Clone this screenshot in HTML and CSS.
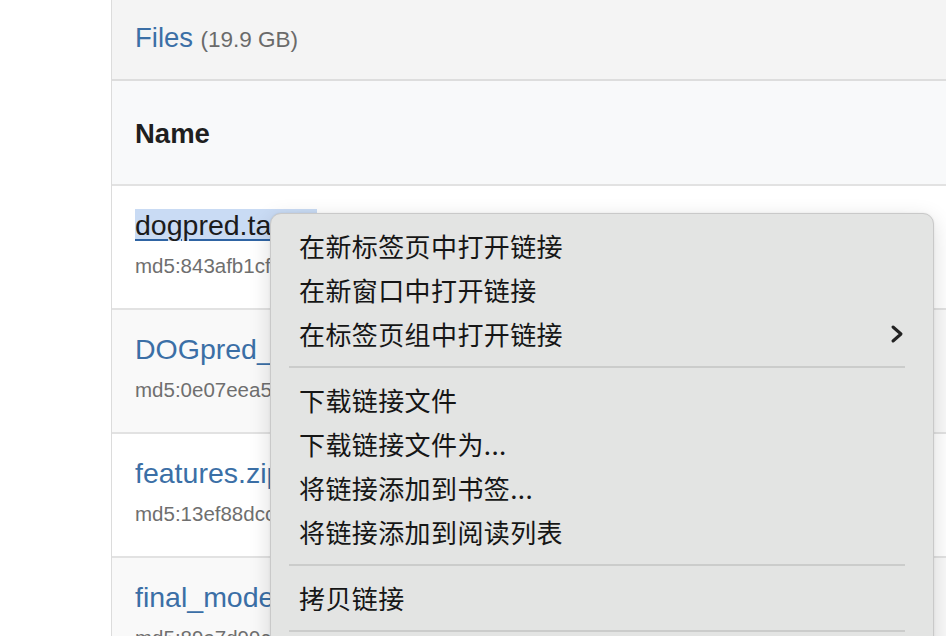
FILE: index.html
```html
<!DOCTYPE html>
<html lang="zh-CN">
<head>
<meta charset="utf-8">
<title>Files</title>
<link rel="stylesheet" href="styles.css">
</head>
<body>
<div class="page">
  <div class="card">
    <div class="card-head">
      <span class="title">Files</span> <span class="size">(19.9 GB)</span>
    </div>
    <div class="thead">Name</div>
    <div class="row">
      <div class="fname"><a class="link selected" href="#">dogpred.tar.gz</a></div>
      <div class="md5">md5:843afb1cf0a2e4b7c9d1f3a5</div>
    </div>
    <div class="row alt">
      <div class="fname"><a class="link" href="#">DOGpred_model.pkl</a></div>
      <div class="md5">md5:0e07eea54b1c2d3e4f5a6b7c</div>
    </div>
    <div class="row">
      <div class="fname"><a class="link" href="#">features.zip</a></div>
      <div class="md5">md5:13ef88dcc4a5b6c7d8e9f0a1</div>
    </div>
    <div class="row alt">
      <div class="fname"><a class="link" href="#">final_model.h5</a></div>
      <div class="md5">md5:89a7d99c1e2f3a4b5c6d7e8f</div>
    </div>
  </div>

  <div class="menu">
    <div class="item">在新标签页中打开链接</div>
    <div class="item">在新窗口中打开链接</div>
    <div class="item has-sub">在标签页组中打开链接
      <svg class="chev" width="14" height="20" viewBox="0 0 14 20"><polyline points="3,3 11,10 3,17" fill="none" stroke="#222" stroke-width="3" stroke-linecap="round" stroke-linejoin="round"/></svg>
    </div>
    <div class="sep"></div>
    <div class="item">下载链接文件</div>
    <div class="item">下载链接文件为...</div>
    <div class="item">将链接添加到书签...</div>
    <div class="item">将链接添加到阅读列表</div>
    <div class="sep"></div>
    <div class="item">拷贝链接</div>
    <div class="sep"></div>
    <div class="item">共享</div>
  </div>
</div>
</body>
</html>
```

FILE: styles.css
```css
html, body {
  margin: 0;
  padding: 0;
  background: #ffffff;
  overflow: hidden;
}
body {
  width: 946px;
  height: 636px;
  font-family: "Liberation Sans", Arial, Helvetica, sans-serif;
}
.page {
  position: relative;
  width: 946px;
  height: 636px;
  overflow: hidden;
}
.card {
  margin-left: 111px;
  width: 900px;
  border-left: 1px solid #dcdcdc;
  background: #fff;
}
.card-head {
  box-sizing: border-box;
  height: 81px;
  padding: 22px 0 0 23px;
  line-height: 32px;
  background: #f4f4f4;
  border-bottom: 2px solid #dddddd;
}
.title {
  font-size: 27.5px;
  color: #3b6fa6;
}
.size {
  margin-left: 3px;
  font-size: 22.5px;
  color: #6a6a6a;
}
.thead {
  box-sizing: border-box;
  height: 105px;
  padding: 37px 0 0 23px;
  line-height: 32px;
  font-size: 27.5px;
  font-weight: bold;
  color: #1f1f1f;
  background: #f8f9fa;
  border-bottom: 2px solid #e2e2e2;
}
.row {
  box-sizing: border-box;
  height: 124px;
  padding: 23px 0 0 23px;
  border-bottom: 2px solid #e2e2e2;
  background: #ffffff;
  white-space: nowrap;
}
.row.alt {
  background: #f9f9f9;
}
.fname {
  font-size: 28.5px;
  line-height: 33px;
}
.link {
  color: #3b6fa6;
  text-decoration: none;
}
.link.selected {
  color: #1c1c1c;
  background: #c9dbf4;
  text-decoration: underline;
  text-decoration-color: #2f64a3;
  text-decoration-thickness: 2px;
  text-underline-offset: 4px;
}
.md5 {
  margin-top: 10px;
  font-size: 20.5px;
  line-height: 28px;
  color: #6f6f6f;
}
.menu {
  position: absolute;
  left: 270px;
  top: 213px;
  width: 664px;
  box-sizing: border-box;
  padding: 10px 0 10px;
  background: #e3e4e3;
  border: 1px solid #c9c9c9;
  border-radius: 11px;
  box-shadow: 0 6px 22px rgba(0, 0, 0, 0.14), 0 0 2px rgba(0, 0, 0, 0.08);
  font-family: "Noto Sans CJK SC", "Noto Sans", sans-serif;
  color: #161616;
}
.item {
  display: flex;
  align-items: center;
  justify-content: space-between;
  height: 44px;
  padding: 0 30px 0 28px;
  font-size: 26px;
  letter-spacing: 0.4px;
  line-height: 44px;
}
.chev {
  display: block;
  margin-right: -1px;
}
.sep {
  height: 2px;
  margin: 10px 28px 10px 18px;
  background: #cbcccb;
}
```
